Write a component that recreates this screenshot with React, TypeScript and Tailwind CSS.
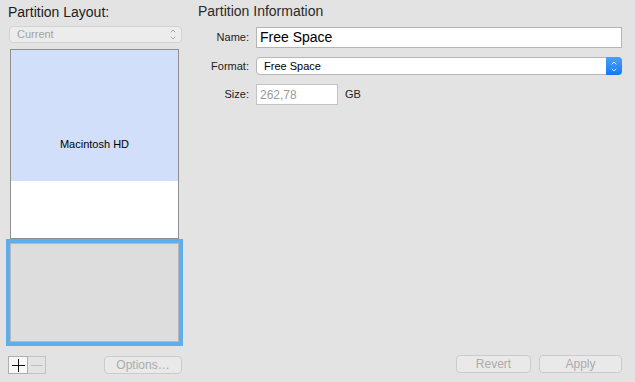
import { ChevronUp, ChevronDown } from 'lucide-react';

function Stepper({ color }: { color: string }) {
  return (
    <span className="flex flex-col items-center justify-center leading-none">
      <ChevronUp size={8} strokeWidth={2.5} color={color} className="-mb-[1px]" />
      <ChevronDown size={8} strokeWidth={2.5} color={color} />
    </span>
  );
}

function MacButton({ label, width }: { label: string; width: string }) {
  return (
    <div
      className={`${width} h-[18px] flex items-center justify-center rounded-[4px] border border-[#cbcbcb] bg-[#e9e9e9] text-[12px] text-[#ababab]`}
    >
      {label}
    </div>
  );
}

function App(): JSX.Element {
  return (
    <div
      className="w-[635px] h-[382px] bg-[#e3e3e3] flex overflow-hidden text-[#222]"
      style={{ fontFamily: '"Liberation Sans", Arial, sans-serif' }}
    >
      {/* left column: layout */}
      <div className="w-[190px] flex flex-col pt-[4px]">
        <p className="ml-[8px] text-[14px] leading-[16px] text-[#1c1c1c]">Partition Layout:</p>
        <div className="ml-[9px] mt-[6px] w-[173px] h-[17px] flex items-center justify-between rounded-[4px] border border-[#d3d3d3] bg-[#ececec] pl-[7px] pr-[4px]">
          <span className="text-[11px] text-[#a3a3a3]">Current</span>
          <Stepper color="#9a9a9a" />
        </div>
        {/* partition map: label is centered over the whole disk, not the used part */}
        <div className="ml-[10px] mt-[6px] w-[169px] grid border border-[#8f8f8f] bg-white">
          <div className="col-start-1 row-start-1 flex flex-col">
            <div className="h-[131px] bg-[#d2dffa]" />
            <div className="h-[57px] bg-white" />
          </div>
          <div className="col-start-1 row-start-1 flex items-center justify-center">
            <span className="text-[11px] text-black">Macintosh HD</span>
          </div>
        </div>
        <div className="ml-[6px] w-[177px] h-[107px] border-[4px] border-[#5eaeec]">
          <div className="h-full w-full border border-[#b7b7b7] bg-[#dddddd]" />
        </div>
        <div className="mt-[10px] flex items-center">
          <div className="ml-[8px] flex h-[18px]">
            <div className="w-[20px] h-full grid place-items-center border border-[#aeaeae] bg-[#f7f7f7]">
              <div className="col-start-1 row-start-1 w-[13px] h-[1px] bg-[#111]" />
              <div className="col-start-1 row-start-1 w-[1px] h-[13px] bg-[#111]" />
            </div>
            <div className="w-[18px] h-full flex items-center justify-center border border-l-0 border-[#c2c2c2] bg-[#e3e3e3]">
              <div className="w-[12px] h-[1px] bg-[#bdbdbd]" />
            </div>
          </div>
          <div className="ml-[58px]">
            <MacButton label="Options…" width="w-[78px]" />
          </div>
        </div>
      </div>

      {/* right column: info */}
      <div className="flex-1 flex flex-col pt-[3px] pl-[8px] pr-[13px] pb-[9px]">
        <p className="text-[14px] leading-[16px] text-[#2a2a2a]">Partition Information</p>
        <div className="mt-[8px] flex items-center">
          <span className="w-[51px] text-right text-[11px] text-[#222]">Name:</span>
          <div className="ml-[7px] flex-1 h-[21px] flex items-center border border-[#b4b4b4] bg-white pl-[3px] text-[14px] text-black">
            Free Space
          </div>
        </div>
        <div className="mt-[9px] flex items-center">
          <span className="w-[51px] text-right text-[11px] text-[#222]">Format:</span>
          <div className="ml-[7px] flex-1 h-[18px] flex items-center justify-between rounded-[4px] border border-[#b7b7b7] bg-white pl-[7px]">
            <span className="text-[11px] text-black">Free Space</span>
            <div className="w-[16px] h-[18px] -mr-[1px] rounded-r-[4px] bg-gradient-to-b from-[#4ba0f8] to-[#1378f6] flex items-center justify-center">
              <Stepper color="#ffffff" />
            </div>
          </div>
        </div>
        <div className="mt-[9px] flex items-center">
          <span className="w-[51px] text-right text-[11px] text-[#222]">Size:</span>
          <div className="ml-[7px] w-[82px] h-[21px] flex items-center border border-[#c3c3c3] bg-white pl-[3px] text-[12px] text-[#9a9a9a]">
            262,78
          </div>
          <span className="ml-[7px] text-[11px] text-[#222]">GB</span>
        </div>
        <div className="mt-auto flex justify-end gap-[8px]">
          <MacButton label="Revert" width="w-[75px]" />
          <MacButton label="Apply" width="w-[83px]" />
        </div>
      </div>
    </div>
  );
}

export default App;
